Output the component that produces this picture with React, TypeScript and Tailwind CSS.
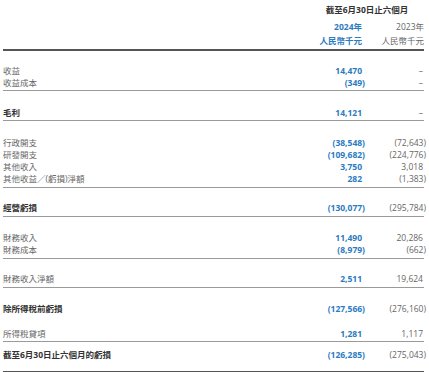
import React from "react";

type Row = { label: string; cur: number | null; prev: number | null };
type Section = { rows: Row[]; bold?: boolean; mt: string; line: "thin" | "thick" | "none"; lineMt: string };

const sections: Section[] = [
  {
    rows: [
      { label: "收益", cur: 14470, prev: null },
      { label: "收益成本", cur: -349, prev: null },
    ],
    mt: "mt-[14px]",
    line: "thin",
    lineMt: "mt-[1px]",
  },
  { rows: [{ label: "毛利", cur: 14121, prev: null }], bold: true, mt: "mt-[16px]", line: "thin", lineMt: "mt-[1px]" },
  {
    rows: [
      { label: "行政開支", cur: -38548, prev: -72643 },
      { label: "研發開支", cur: -109682, prev: -224776 },
      { label: "其他收入", cur: 3750, prev: 3018 },
      { label: "其他收益／(虧損)淨額", cur: 282, prev: -1383 },
    ],
    mt: "mt-[16px]",
    line: "thin",
    lineMt: "mt-[2px]",
  },
  { rows: [{ label: "經營虧損", cur: -130077, prev: -295784 }], bold: true, mt: "mt-[14px]", line: "thin", lineMt: "mt-[2px]" },
  {
    rows: [
      { label: "財務收入", cur: 11490, prev: 20286 },
      { label: "財務成本", cur: -8979, prev: -662 },
    ],
    mt: "mt-[15px]",
    line: "thin",
    lineMt: "mt-[2px]",
  },
  { rows: [{ label: "財務收入淨額", cur: 2511, prev: 19624 }], mt: "mt-[14px]", line: "thin", lineMt: "mt-[2px]" },
  { rows: [{ label: "除所得稅前虧損", cur: -127566, prev: -276160 }], bold: true, mt: "mt-[15px]", line: "none", lineMt: "" },
  { rows: [{ label: "所得稅貸項", cur: 1281, prev: 1117 }], mt: "mt-[13px]", line: "thin", lineMt: "mt-[1px]" },
  { rows: [{ label: "截至6月30日止六個月的虧損", cur: -126285, prev: -275043 }], bold: true, mt: "mt-[7px]", line: "thick", lineMt: "mt-[10px]" },
];

const fmt = (n: number | null) => {
  if (n === null) return <span className="pr-[3px]">–</span>;
  const s = Math.abs(n).toLocaleString("en-US");
  return n < 0 ? <span>({s})</span> : <span className="pr-[3px]">{s}</span>;
};

export default function App() {
  return (
    <div
      className="w-[429px] h-[372px] bg-white px-[3px] overflow-hidden text-[8.5px]"
      style={{ fontFamily: '"Open Sans", "Noto Sans CJK TC", sans-serif' }}
    >
      {/* header */}
      <div className="flex pt-[4px]">
        <div className="flex-1" />
        <div className="w-[123px] text-center pl-[5px] font-bold text-[#333] leading-[12px]">截至6月30日止六個月</div>
      </div>
      <div className="flex mt-[4px] leading-[14px]">
        <div className="flex-1" />
        <div className="w-[62px] text-right pr-[3px] text-[#2b7bbf] font-bold">
          <div>2024年</div>
          <div>人民幣千元</div>
        </div>
        <div className="w-[61px] text-right pr-[2px] text-[#666]">
          <div>2023年</div>
          <div>人民幣千元</div>
        </div>
      </div>
      <div className="h-[2px] bg-[#555] mt-[1px] mr-[2px]" />

      {sections.map((sec, i) => (
        <div key={i}>
          <div className={sec.mt}>
            {sec.rows.map((r) => (
              <div key={r.label} className="flex h-[12px] leading-[12px] items-center">
                <div className={`flex-1 ${sec.bold ? "font-bold text-[#333]" : "text-[#666]"}`}>{r.label}</div>
                <div className="w-[62px] text-right font-bold text-[#2b7bbf]">{fmt(r.cur)}</div>
                <div className="w-[61px] text-right text-[#666]">{fmt(r.prev)}</div>
              </div>
            ))}
          </div>
          {sec.line === "thin" && <div className={`h-px bg-[#9a9a9a] mr-[2px] ${sec.lineMt}`} />}
          {sec.line === "thick" && <div className={`h-[2px] bg-[#555] mr-[2px] ${sec.lineMt}`} />}
        </div>
      ))}
    </div>
  );
}
